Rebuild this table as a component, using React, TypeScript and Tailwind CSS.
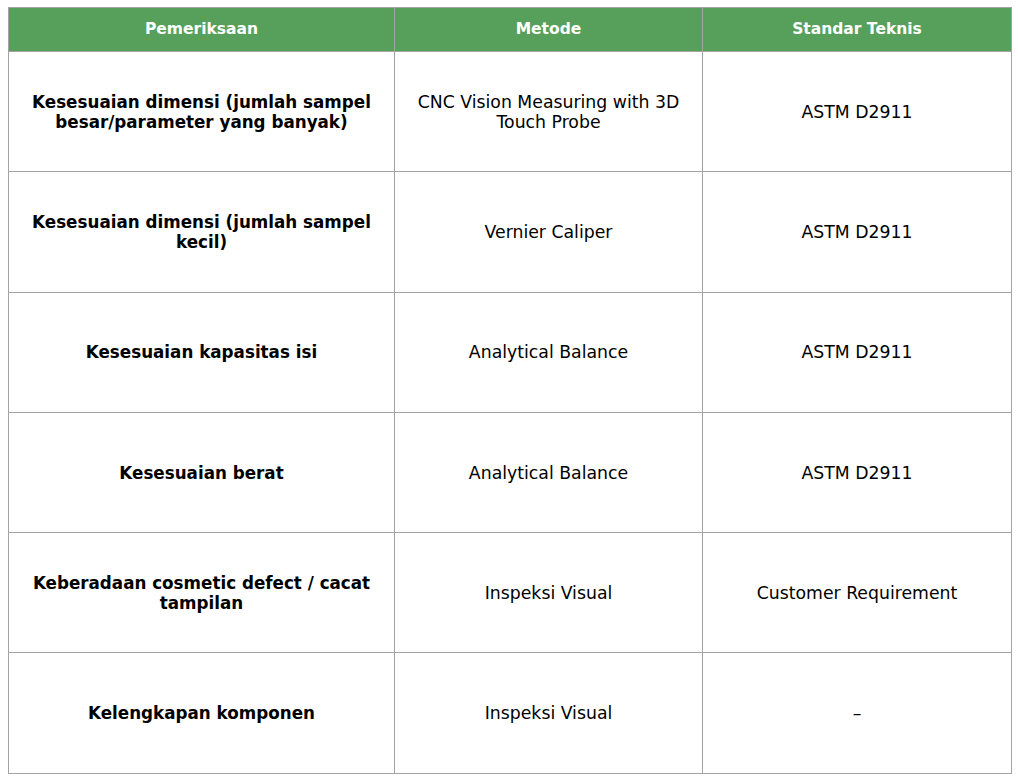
const rows = [
  {
    check: 'Kesesuaian dimensi (jumlah sampel besar/parameter yang banyak)',
    method: 'CNC Vision Measuring with 3D Touch Probe',
    standard: 'ASTM D2911',
  },
  {
    check: 'Kesesuaian dimensi (jumlah sampel kecil)',
    method: 'Vernier Caliper',
    standard: 'ASTM D2911',
  },
  { check: 'Kesesuaian kapasitas isi', method: 'Analytical Balance', standard: 'ASTM D2911' },
  { check: 'Kesesuaian berat', method: 'Analytical Balance', standard: 'ASTM D2911' },
  {
    check: 'Keberadaan cosmetic defect / cacat tampilan',
    method: 'Inspeksi Visual',
    standard: 'Customer Requirement',
  },
  { check: 'Kelengkapan komponen', method: 'Inspeksi Visual', standard: '–' },
]

export default function App() {
  return (
    <div className="min-h-screen bg-white pl-2 pt-[7px] font-['DejaVu_Sans',sans-serif] text-black">
      <table className="w-[1003px] table-fixed border-collapse">
        <colgroup>
          <col className="w-[386px]" />
          <col className="w-[308px]" />
          <col className="w-[309px]" />
        </colgroup>
        <thead>
          <tr className="h-[44px] bg-[#57a05b] text-white">
            <th className="border border-[#a3a3a3] text-[15.5px] font-bold">Pemeriksaan</th>
            <th className="border border-[#a3a3a3] text-[15.5px] font-bold">Metode</th>
            <th className="border border-[#a3a3a3] text-[15.5px] font-bold">Standar Teknis</th>
          </tr>
        </thead>
        <tbody>
          {rows.map((r, i) => (
            <tr key={i} className="h-[120.3px]">
              <td className="border border-[#a3a3a3] px-5 text-center text-[16.75px] font-bold leading-5">
                {r.check}
              </td>
              <td className="border border-[#a3a3a3] px-5 text-center text-[17.3px] leading-5">
                {r.method}
              </td>
              <td className="border border-[#a3a3a3] px-5 text-center text-[17.3px] leading-5">
                {r.standard}
              </td>
            </tr>
          ))}
        </tbody>
      </table>
    </div>
  )
}
